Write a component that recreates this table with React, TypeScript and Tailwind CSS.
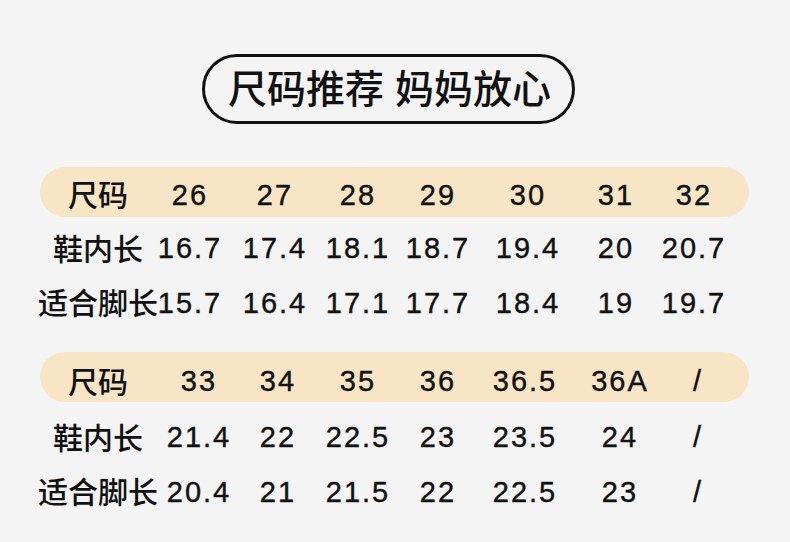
import React from "react";

const font = { fontFamily: '"Liberation Sans", "Noto Sans CJK SC", sans-serif' };

type Row = string[];

function Cell({ text }: { text: string }) {
  const isCjk = /[\u4e00-\u9fff]/.test(text);
  return (
    <div className="flex items-center justify-center whitespace-nowrap overflow-visible">
      <span
        className={
          isCjk
            ? "text-[30px] leading-none font-medium text-[#111111] -translate-y-[2px]"
            : "text-[29px] leading-none tracking-[2px] text-[#111111] [-webkit-text-stroke:0.4px_#111111]"
        }
        style={isCjk ? { fontFamily: '"Noto Sans CJK SC", sans-serif' } : undefined}
      >
        {text}
      </span>
    </div>
  );
}

function Table({
  cols,
  rows,
  barPad,
  row2Top,
}: {
  cols: string;
  rows: Row[];
  barPad: string;
  row2Top: string;
}) {
  return (
    <div className="flex flex-col">
      <div className={`w-[709px] h-[50px] rounded-full bg-[#f8e5c6] ${barPad}`}>
        <div className={`grid ${cols} h-full`}>
          {rows[0].map((t, i) => (
            <Cell key={i} text={t} />
          ))}
        </div>
      </div>
      <div className={`grid ${cols} h-[55px] ${row2Top}`}>
        {rows[1].map((t, i) => (
          <Cell key={i} text={t} />
        ))}
      </div>
      <div className={`grid ${cols} h-[54px]`}>
        {rows[2].map((t, i) => (
          <Cell key={i} text={t} />
        ))}
      </div>
    </div>
  );
}

export default function App() {
  return (
    <div className="w-[790px] h-[542px] bg-[#f4f4f4] overflow-hidden" style={font}>
      <div className="pt-[54px] pl-[202px]">
        <div className="w-[373px] h-[70px] rounded-full border-[3px] border-[#111111] flex items-center justify-center">
          <span
            className="text-[39px] leading-none font-medium text-[#111111] pl-[2px]"
            style={{ fontFamily: '"Liberation Sans", "Noto Sans CJK SC", sans-serif' }}
          >
            尺码推荐 妈妈放心
          </span>
        </div>
      </div>
      <div className="pl-[40px] mt-[43px]">
        <Table
          cols="grid-cols-[116px_68px_102px_64px_96px_84px_92px_64px]"
          barPad="pt-[6px]"
          row2Top="mt-[4px]"
          rows={[
            ["尺码", "26", "27", "28", "29", "30", "31", "32"],
            ["鞋内长", "16.7", "17.4", "18.1", "18.7", "19.4", "20", "20.7"],
            ["适合脚长", "15.7", "16.4", "17.1", "17.7", "18.4", "19", "19.7"],
          ]}
        />
        <div className="mt-[22px]">
          <Table
            cols="grid-cols-[116px_86px_72px_88px_72px_102px_88px_68px]"
            barPad="pt-[9px]"
            row2Top="mt-[8px]"
            rows={[
              ["尺码", "33", "34", "35", "36", "36.5", "36A", "/"],
              ["鞋内长", "21.4", "22", "22.5", "23", "23.5", "24", "/"],
              ["适合脚长", "20.4", "21", "21.5", "22", "22.5", "23", "/"],
            ]}
          />
        </div>
      </div>
    </div>
  );
}
